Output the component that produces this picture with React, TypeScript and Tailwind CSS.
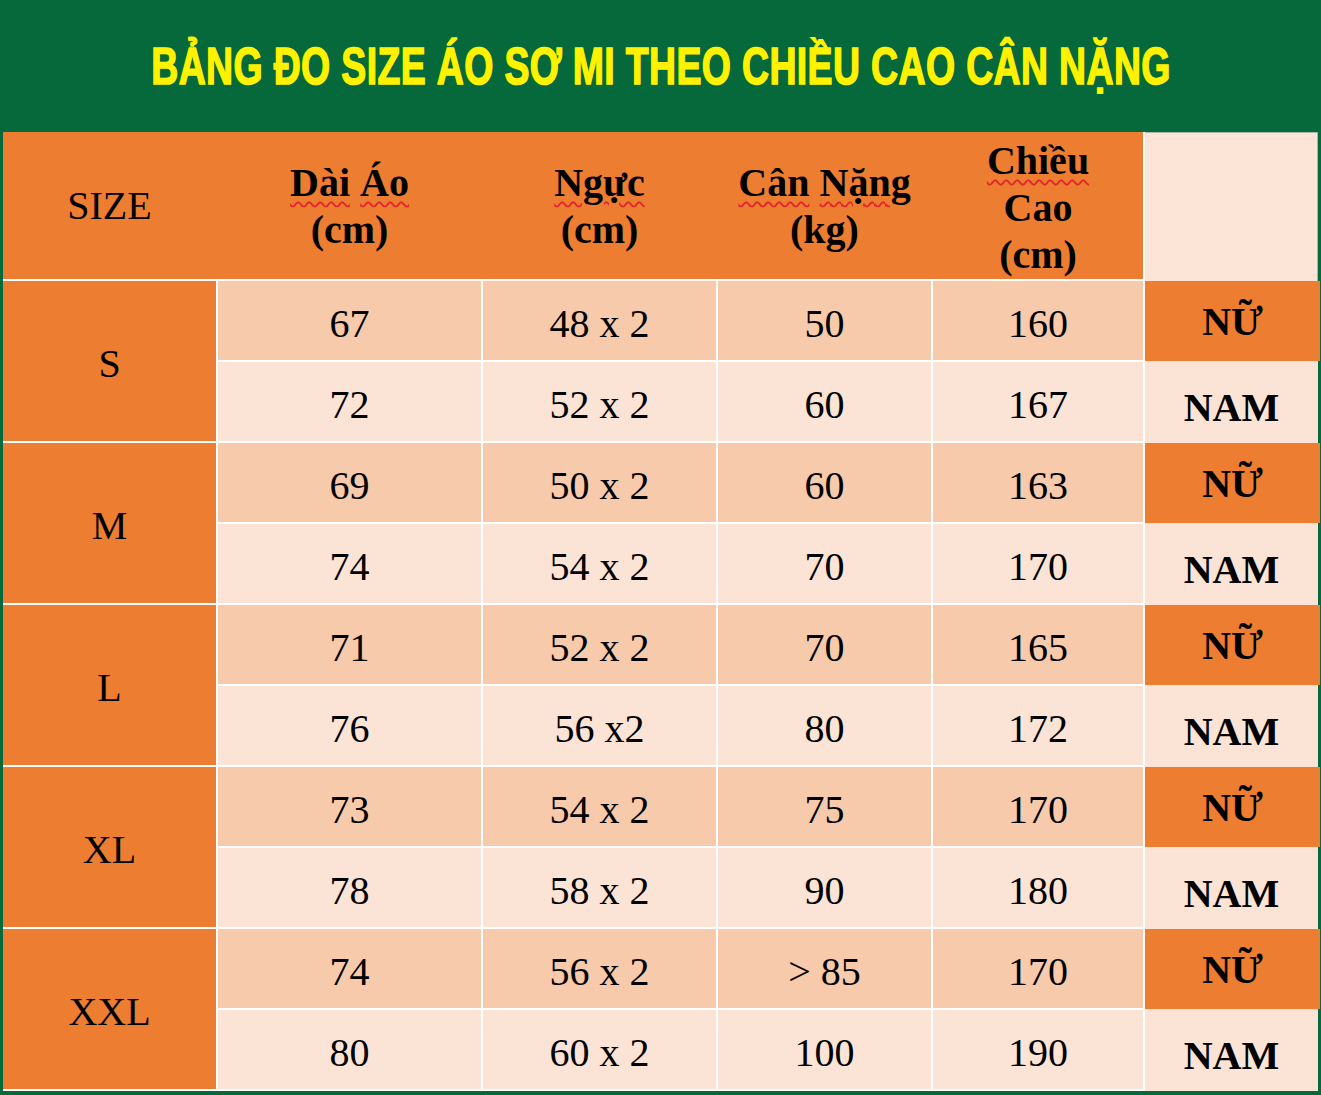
const rows = [
  { size: "S", a: ["67", "48 x 2", "50", "160"], b: ["72", "52 x 2", "60", "167"] },
  { size: "M", a: ["69", "50 x 2", "60", "163"], b: ["74", "54 x 2", "70", "170"] },
  { size: "L", a: ["71", "52 x 2", "70", "165"], b: ["76", "56 x2", "80", "172"] },
  { size: "XL", a: ["73", "54 x 2", "75", "170"], b: ["78", "58 x 2", "90", "180"] },
  { size: "XXL", a: ["74", "56 x 2", "> 85", "170"], b: ["80", "60 x 2", "100", "190"] },
];

function Wavy({ children }: { children: React.ReactNode }) {
  return (
    <span className="underline decoration-wavy decoration-[#e3262b] decoration-[1.5px] underline-offset-[5px]">
      {children}
    </span>
  );
}

export default function App() {
  return (
    <div className="w-[1321px] h-[1095px] bg-[#06693b] px-[3px] text-black font-['Liberation_Serif']">
      <div className="h-[132px] flex items-center justify-center">
        <h1 className="inline-block scale-x-[0.72] whitespace-nowrap text-[52px] font-bold text-[#fff200] font-['Liberation_Sans'] tracking-[0.5px] [-webkit-text-stroke:1.5px_#fff200]">
          BẢNG ĐO SIZE ÁO SƠ MI THEO CHIỀU CAO CÂN NẶNG
        </h1>
      </div>

      <div className="flex">
        <div className="w-[1142px] bg-white pr-[2px] pb-[2px] flex flex-col gap-[2px]">
          <div className="h-[147px] bg-[#ed7d31] flex text-[40px] leading-[47px]">
            <div className="w-[215px] pr-[2px] flex items-center justify-center">SIZE</div>
            <div className="w-[265px] pr-[2px] flex flex-col items-center justify-center font-bold">
              <div>
                <Wavy>Dài</Wavy> <Wavy>Áo</Wavy>
              </div>
              <div>(cm)</div>
            </div>
            <div className="w-[235px] pr-[2px] flex flex-col items-center justify-center font-bold">
              <div>
                <Wavy>Ngực</Wavy>
              </div>
              <div>(cm)</div>
            </div>
            <div className="w-[215px] pr-[2px] flex flex-col items-center justify-center font-bold">
              <div>
                <Wavy>Cân</Wavy> <Wavy>Nặng</Wavy>
              </div>
              <div>(kg)</div>
            </div>
            <div className="w-[210px] flex flex-col items-center justify-center font-bold pt-[4px]">
              <div>
                <Wavy>Chiều</Wavy>
              </div>
              <div>Cao</div>
              <div>(cm)</div>
            </div>
          </div>

          {rows.map((r) => (
            <div
              key={r.size}
              className="h-[160px] grid grid-cols-[213px_263px_233px_213px_210px] grid-rows-[79px_79px] gap-[2px] text-[40px]"
            >
              <div className="row-span-2 bg-[#ed7d31] flex items-center justify-center pt-[5px]">{r.size}</div>
              {r.a.map((v, i) => (
                <div key={"a" + i} className="bg-[#f7caac] flex items-center justify-center pt-[7px]">
                  {v}
                </div>
              ))}
              {r.b.map((v, i) => (
                <div key={"b" + i} className="bg-[#fbe4d5] flex items-center justify-center pt-[7px]">
                  {v}
                </div>
              ))}
            </div>
          ))}
        </div>

        <div className="w-[173px] flex flex-col text-[40px] font-bold">
          <div className="h-[149px] bg-[#fce4d6] border-t border-r border-[#aab4a6]" />
          {rows.map((r) => (
            <div key={r.size} className="flex flex-col">
              <div className="h-[80px] w-[175px] bg-[#ed7d31] flex items-center justify-center pt-[2px]">NỮ</div>
              <div className="h-[82px] bg-[#fbe4d5] flex items-center justify-center pt-[12px]">NAM</div>
            </div>
          ))}
        </div>
      </div>
    </div>
  );
}
